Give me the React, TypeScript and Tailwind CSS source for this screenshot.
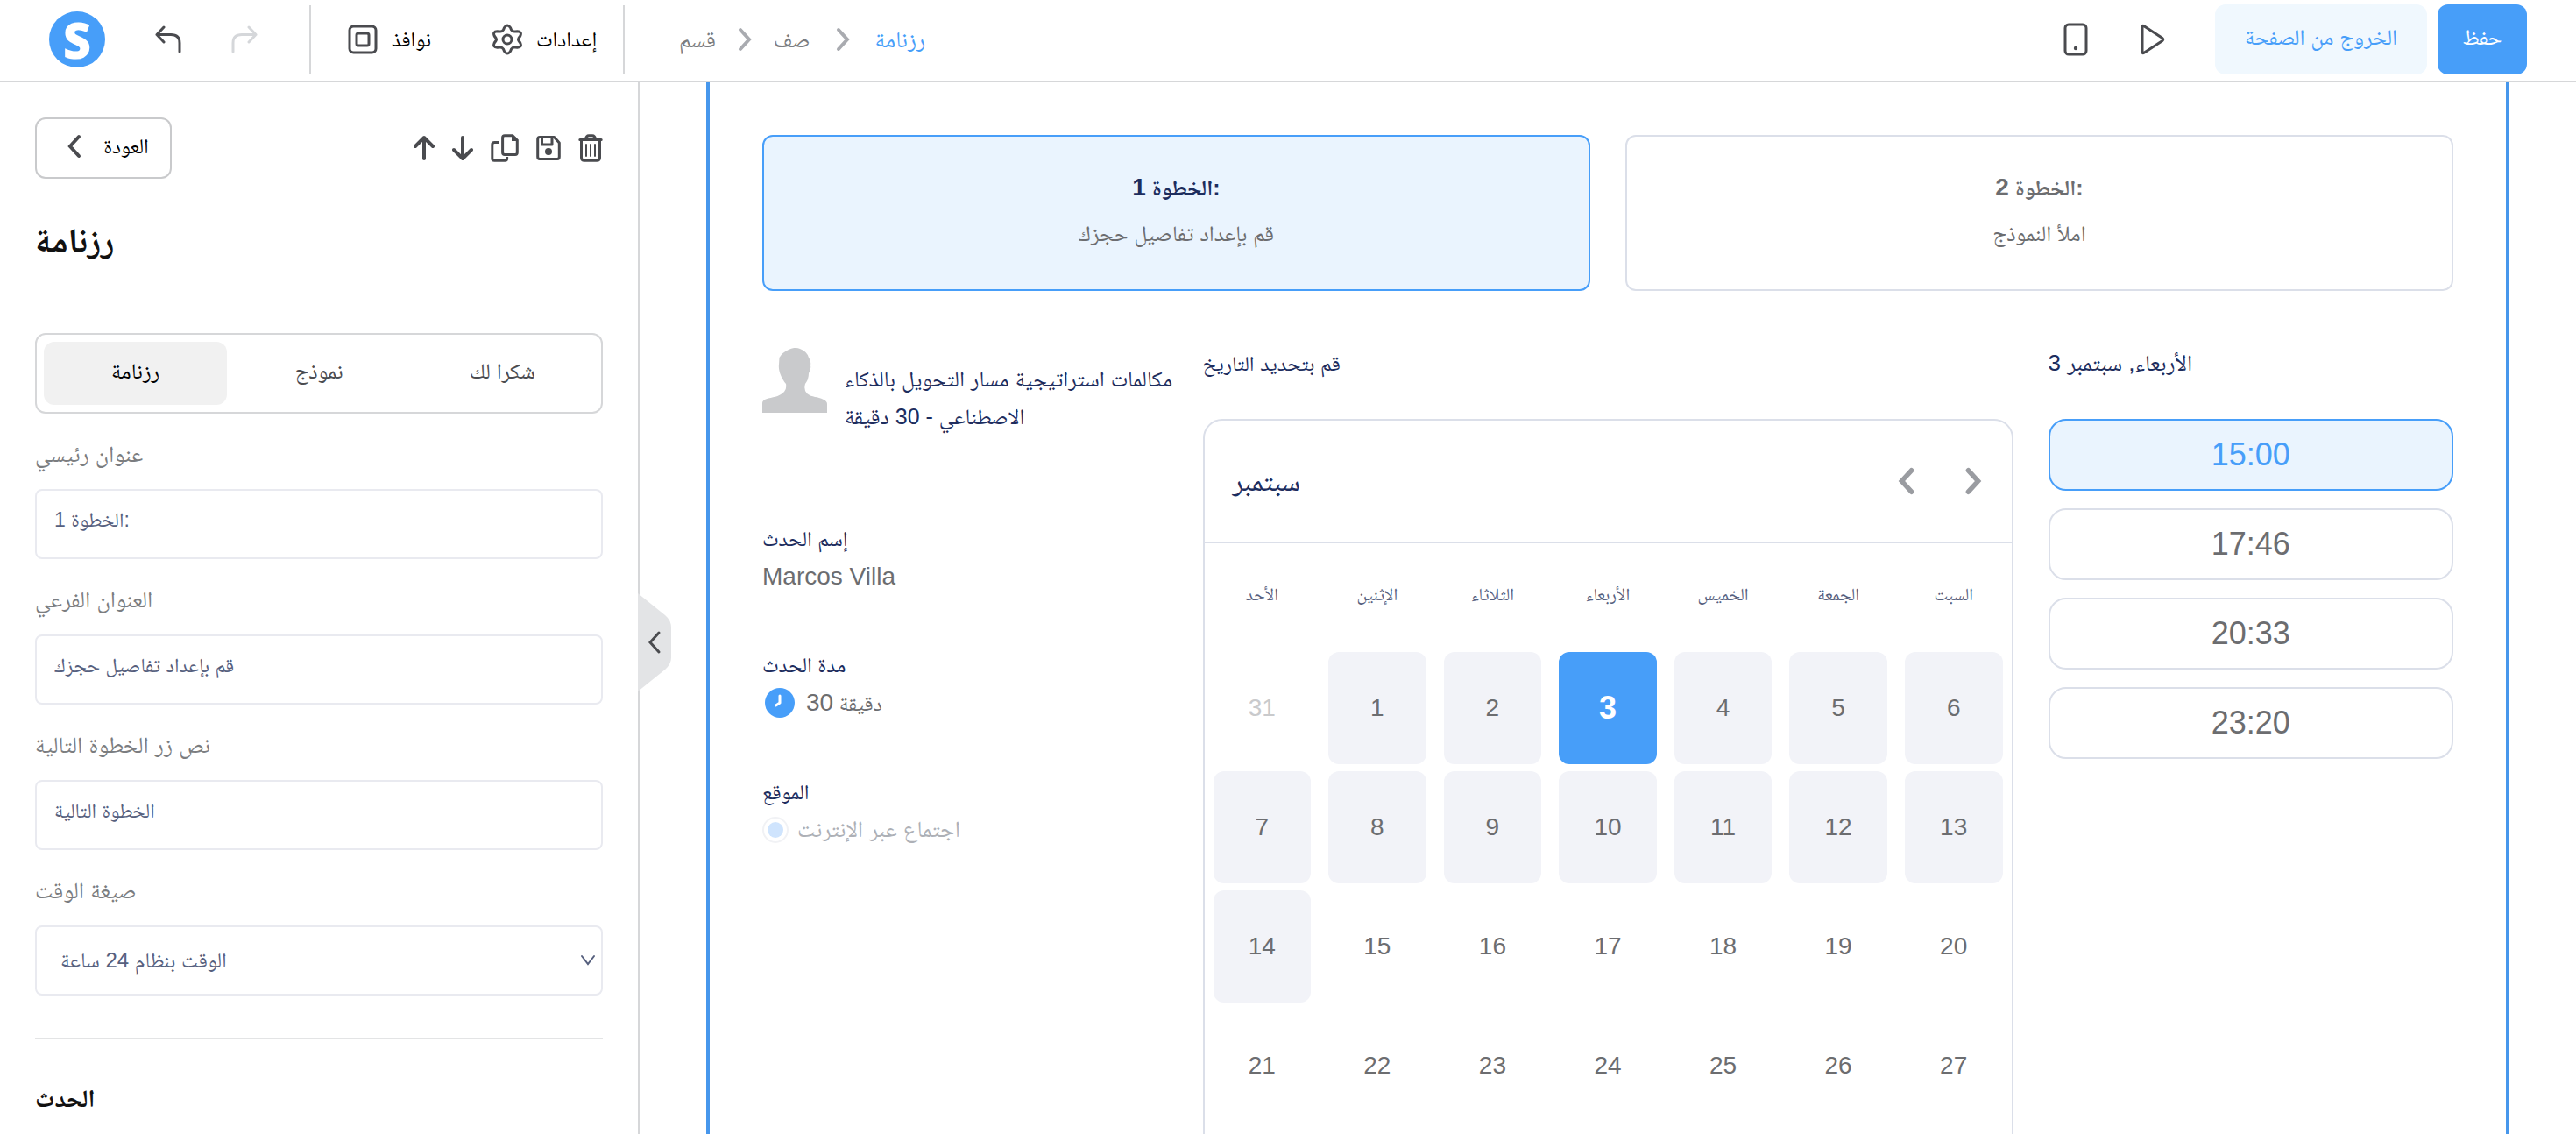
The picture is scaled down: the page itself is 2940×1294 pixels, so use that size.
import type { ReactNode } from 'react';

function UndoIcon() {
  return (
    <svg width="30" height="32" viewBox="0 0 30 32" fill="none" stroke="currentColor" strokeWidth="3" strokeLinecap="round" strokeLinejoin="round">
      <path d="M10 2L2 10.500L10 19M2 10.500H18C25 10.500 28 14 28 20V30" />
    </svg>
  );
}

function RedoIcon() {
  return (
    <svg width="30" height="32" viewBox="0 0 30 32" fill="none" stroke="currentColor" strokeWidth="3" strokeLinecap="round" strokeLinejoin="round">
      <path d="M20 2L28 10.500L20 19M28 10.500H12C5 10.500 2 14 2 20V30" />
    </svg>
  );
}

function PopupsIcon() {
  return (
    <svg width="34" height="34" viewBox="0 0 34 34" fill="none" stroke="currentColor" strokeWidth="3">
      <rect x="2" y="2" width="30" height="30" rx="4.500" />
      <rect x="10" y="10" width="14" height="14" rx="2" />
    </svg>
  );
}

function GearIcon() {
  return (
    <svg width="34" height="36" viewBox="0 0 34 36" fill="none" stroke="currentColor" strokeWidth="3" strokeLinejoin="round">
      <path d="M13.500 4.500Q17 -0.500 20.500 4.500L21.500 7Q23 9.500 26 9L28.500 8.800Q34 9 31.800 14L30 16.500Q29 18 30 19.500L31.800 22Q34 27 28.500 27.200L26 27Q23 26.500 21.500 29L20.500 31.500Q17 36.500 13.500 31.500L12.500 29Q11 26.500 8 27L5.500 27.200Q0 27 2.200 22L4 19.500Q5 18 4 16.500L2.200 14Q0 9 5.500 8.800L8 9Q11 9.500 12.500 7Z" />
      <circle cx="17" cy="18" r="5" />
    </svg>
  );
}

function Chevron({ className, dir, stroke = 4 }: { className: string; dir: 'left' | 'right' | 'down'; stroke?: number }) {
  const d = { left: 'M14 3L4 14L14 25', right: 'M4 3L14 14L4 25', down: 'M2 9L9 18L16 9' }[dir];
  return (
    <svg className={className} viewBox="0 0 18 28" fill="none" stroke="currentColor" strokeWidth={stroke} strokeLinecap="round">
      <path d={d} />
    </svg>
  );
}

function PhoneIcon() {
  return (
    <svg width="28" height="38" viewBox="0 0 28 38" fill="none" stroke="currentColor" strokeWidth="3">
      <rect x="2" y="2" width="24" height="34" rx="4" />
      <circle cx="14" cy="29" r="2.200" fill="currentColor" stroke="none" />
    </svg>
  );
}

function PlayIcon() {
  return (
    <svg width="28" height="36" viewBox="0 0 28 36" fill="none" stroke="currentColor" strokeWidth="3" strokeLinejoin="round">
      <path d="M2 3.500Q2 1.500 4 2.800L25 16.600Q26.600 18 25 19.400L4 33.200Q2 34.500 2 32.500Z" />
    </svg>
  );
}

function ArrowIcon({ down = false }: { down?: boolean }) {
  return (
    <svg width="24" height="30" viewBox="0 0 24 30" fill="none" stroke="currentColor" strokeWidth="4" strokeLinecap="round" strokeLinejoin="round">
      <path d={down ? 'M12 3V26M2 17L12 27L22 17' : 'M12 27V4M2 13L12 3L22 13'} />
    </svg>
  );
}

function CopyIcon() {
  return (
    <svg width="32" height="32" viewBox="0 0 32 32" fill="none" stroke="currentColor" strokeWidth="3">
      <path d="M9 9.500H4.500Q1.800 9.500 1.800 12V28Q1.800 30.300 4.200 30.300H16.500Q18.600 30.300 18.600 28V26" />
      <path d="M16 1.700H25L30.300 7V21Q30.300 23.500 28 23.500H16Q13.600 23.500 13.600 21V4Q13.600 1.700 16 1.700Z" />
      <path d="M24 1V8H31L29 4Z" fill="currentColor" stroke="none" />
    </svg>
  );
}

function SaveIcon() {
  return (
    <svg width="28" height="30" viewBox="0 0 28 30" fill="none" stroke="currentColor" strokeWidth="3" strokeLinejoin="round">
      <path d="M4 2.500H20.500L26.300 9V25Q26.300 27.500 24 27.500H4Q1.700 27.500 1.700 25V5Q1.700 2.500 4 2.500Z" />
      <path d="M6.500 3V11H18V3" />
      <circle cx="14" cy="19" r="4" fill="currentColor" stroke="none" />
    </svg>
  );
}

function TrashIcon() {
  return (
    <svg width="28" height="32" viewBox="0 0 28 32" fill="none" stroke="currentColor" strokeWidth="3" strokeLinecap="round">
      <path d="M1.800 6.500H26.200M8.500 6Q9 1.800 12 1.800H16Q19 1.800 19.500 6" />
      <path d="M3.500 8V27Q3.500 30.300 7 30.300H21Q24.500 30.300 24.500 27V8" />
      <path d="M9 12V25M14 12V25M19 12V25" strokeWidth="2" />
    </svg>
  );
}

function Avatar() {
  return (
    <svg className="mt-1 h-[74px] w-[74px] shrink-0" viewBox="0 0 74 74" fill="#c9cacc">
      <path d="M0 74V63Q0 60 4 58.500C12 55.500 18 57 25 50Q28 47 27 41C22 35 18 26 19 19L19.500 11Q23 5 30 2Q36 -1.500 43 1Q51 4 53 11Q56 15 55 20Q56 24 53 29Q53 36 49 41Q47 48 51 52C57 57 63 55 70 59Q74 61 74 64V74Z" />
    </svg>
  );
}

function ClockIcon() {
  return (
    <svg className="ml-[3px] h-[34px] w-[34px]" viewBox="0 0 34 34" fill="none">
      <circle cx="17" cy="17" r="17" fill="#479ef9" />
      <path d="M17 9V17L12.500 20" stroke="#fff" strokeWidth="3" strokeLinecap="round" strokeLinejoin="round" />
    </svg>
  );
}

function IconButton({ label, children, disabled }: { label: string; children: ReactNode; disabled?: boolean }) {
  return (
    <button type="button" aria-label={label} disabled={disabled} className="disabled:text-[#d5d7da]">
      {children}
    </button>
  );
}

function Header() {
  return (
    <header className="flex h-[94px] shrink-0 items-start border-b-2 border-[#d6d7d9] bg-white text-[#4a4b4f]">
      <div className="flex h-[90px] w-[353px] items-center pl-14">
        <a href="#home" aria-label="Home" className="flex h-16 w-16 items-center justify-center rounded-full bg-[#479ef9] font-['Open_Sans',sans-serif] text-[56px] leading-none font-extrabold text-white">
          S
        </a>
        <div className="ml-[57px] flex gap-[57px]">
          <IconButton label="Undo"><UndoIcon /></IconButton>
          <IconButton label="Redo" disabled><RedoIcon /></IconButton>
        </div>
      </div>
      <div className="mt-1.5 flex h-[78px] w-[360px] items-center gap-[70px] border-x-2 border-[#d6d7d9] pl-[42px] text-[24px] text-black">
        <button type="button" className="flex items-center gap-4"><span className="text-[#4a4b4f]"><PopupsIcon /></span>نوافذ</button>
        <button type="button" className="flex items-center gap-4"><span className="text-[#4a4b4f]"><GearIcon /></span>إعدادات</button>
      </div>
      <nav aria-label="Breadcrumb" className="flex h-[90px] items-center gap-6 pl-[62px] text-[26px] text-[#7b7d80]">
        <a href="#section">قسم</a>
        <Chevron dir="right" stroke={4} className="h-7 w-[18px] text-[#a9abb0]" />
        <a href="#row">صف</a>
        <Chevron dir="right" stroke={4} className="mx-1 h-7 w-[18px] text-[#a9abb0]" />
        <a href="#calendar" className="text-[#479ef9]">رزنامة</a>
      </nav>
      <div className="mt-[5px] ml-auto flex h-20 items-center pr-14 text-[25px]">
        <IconButton label="Mobile view"><PhoneIcon /></IconButton>
        <div className="mr-[57px] ml-[60px] flex"><IconButton label="Preview"><PlayIcon /></IconButton></div>
        <button type="button" className="h-20 w-[242px] rounded-xl bg-[#f0f8fe] pb-1 text-[#479ef9]">الخروج من الصفحة</button>
        <button type="button" className="ml-3 h-20 w-[102px] rounded-xl bg-[#479ef9] pb-1 text-white">حفظ</button>
      </div>
    </header>
  );
}

const fields = [
  { id: 'headline', label: 'عنوان رئيسي', value: 'الخطوة 1:' },
  { id: 'subtitle', label: 'العنوان الفرعي', value: 'قم بإعداد تفاصيل حجزك' },
  { id: 'next', label: 'نص زر الخطوة التالية', value: 'الخطوة التالية' },
];

function Sidebar() {
  return (
    <aside className="relative w-[730px] shrink-0 border-r-2 border-[#d6d7d9] px-10 pt-10">
      <div className="flex items-center justify-between text-[#4a4b4f]">
        <button type="button" className="flex h-[70px] w-[156px] items-center justify-center gap-6 rounded-xl border-2 border-[#c9cacc] pb-1 pl-[10px] text-[24px] text-black">
          <Chevron dir="left" className="h-7 w-[18px] text-[#4a4b4f]" />
          العودة
        </button>
        <div className="flex items-center gap-5">
          <IconButton label="Move up"><ArrowIcon /></IconButton>
          <IconButton label="Move down"><ArrowIcon down /></IconButton>
          <IconButton label="Duplicate"><CopyIcon /></IconButton>
          <IconButton label="Save block"><SaveIcon /></IconButton>
          <IconButton label="Delete"><TrashIcon /></IconButton>
        </div>
      </div>
      <h1 className="mt-10 h-[60px] text-[40px] leading-[60px] font-bold text-[#111]">رزنامة</h1>
      <div role="tablist" className="mt-[76px] grid h-[92px] grid-cols-3 rounded-xl border-2 border-[#d6d7d9] p-2 text-[25px] text-[#4a4b4f]">
        <button type="button" role="tab" aria-selected="true" className="rounded-xl bg-[#f1f1f1] pb-1 text-black">رزنامة</button>
        <button type="button" role="tab" aria-selected="false" className="pb-1">نموذج</button>
        <button type="button" role="tab" aria-selected="false" className="pb-1">شكرا لك</button>
      </div>
      <form className="mt-7">
        {fields.map((f) => (
          <div key={f.id} className="mb-7">
            <label htmlFor={f.id} className="block h-[58px] text-[26px] leading-9 text-[#7b7d80]">{f.label}</label>
            <input id={f.id} type="text" defaultValue={f.value} className="h-20 w-full rounded-lg border-2 border-[#e9eaf0] px-5 pb-1 text-left text-[23px] text-[#56607e]" />
          </div>
        ))}
        <label htmlFor="format" className="block h-[58px] text-[26px] leading-9 text-[#7b7d80]">صيغة الوقت</label>
        <div className="relative text-[#56607e]">
          <select id="format" defaultValue="24" className="h-20 w-full appearance-none rounded-lg border-2 border-[#e9eaf0] bg-white pl-[27px] text-left text-[24px]">
            <option value="24">الوقت بنظام 24 ساعة</option>
          </select>
          <Chevron dir="down" stroke={2} className="pointer-events-none absolute top-[26px] right-2 h-7 w-[18px]" />
        </div>
      </form>
      <hr className="mt-12 border-t-2 border-[#e3e4e5]" />
      <h2 className="mt-[46px] text-[28px] leading-[44px] font-bold text-[#111]">الحدث</h2>
      <button type="button" aria-label="Collapse panel" className="absolute top-[583px] left-full flex h-28 w-[38px] items-center justify-center text-[#4a4b4f]">
        <svg className="absolute inset-0" width="38" height="112" viewBox="0 0 38 112" fill="#e3e4e6">
          <path d="M0 0L31 25Q38 31 38 39V73Q38 81 31 87L0 112Z" />
        </svg>
        <Chevron dir="left" stroke={3} className="relative h-7 w-[18px]" />
      </button>
    </aside>
  );
}

function StepCard({ title, num, text, active }: { title: string; num: string; text: string; active?: boolean }) {
  return (
    <button
      type="button"
      className={
        active
          ? 'h-[178px] rounded-xl border-2 border-[#479ef9] bg-[#eaf4fe] pb-1.5 text-[#1d2d5e]'
          : 'h-[178px] rounded-xl border-2 border-[#dbdfe9] pb-1.5 text-[#6c6d70]'
      }
    >
      <span className="block text-[25px] leading-[52px] font-bold">{title} <span className="text-[28px]">{num}</span>:</span>
      <span className="block text-[25px] leading-[52px] text-[#6c6d70]">{text}</span>
    </button>
  );
}

function EventInfo() {
  return (
    <section className="text-[24px] text-[#1d2d5e]">
      <div className="flex h-[200px] gap-5">
        <Avatar />
        <p className="mt-[18px] text-[25px] leading-[43px] whitespace-nowrap">
          مكالمات استراتيجية مسار التحويل بالذكاء
          <br />
          الاصطناعي - 30 دقيقة
        </p>
      </div>
      <dl className="leading-[43px]">
        <div className="mb-[58px]">
          <dt>إسم الحدث</dt>
          <dd className="text-[28px] text-[#6c6d70]">Marcos Villa</dd>
        </div>
        <div className="mb-[58px]">
          <dt>مدة الحدث</dt>
          <dd className="flex items-center gap-[13px] text-[#6c6d70]">
            <ClockIcon />
            <span><span className="text-[28px]">30</span> دقيقة</span>
          </dd>
        </div>
        <div>
          <dt>الموقع</dt>
          <dd className="text-[26px] text-[#adb0b6]">
            <label className="flex items-center gap-[10px]">
              <input type="radio" name="location" defaultChecked className="h-[30px] w-[30px] appearance-none rounded-full border-2 border-[#f1f2f5] bg-[#cfe4fd] bg-clip-content p-1" />
              اجتماع عبر الإنترنت
            </label>
          </dd>
        </div>
      </dl>
    </section>
  );
}

const weekdays = ['الأحد', 'الإثنين', 'الثلاثاء', 'الأربعاء', 'الخميس', 'الجمعة', 'السبت'];
const weeks = [
  [31, 1, 2, 3, 4, 5, 6],
  [7, 8, 9, 10, 11, 12, 13],
  [14, 15, 16, 17, 18, 19, 20],
  [21, 22, 23, 24, 25, 26, 27],
];

function dayClass(day: number) {
  if (day === 31) return 'h-32 w-full text-[#c9cacc]';
  if (day === 3) return 'h-32 w-full rounded-xl bg-[#479ef9] text-[36px] font-bold text-white';
  if (day <= 14) return 'h-32 w-full rounded-xl bg-[#f2f3f8]';
  return 'h-32 w-full';
}

function Calendar() {
  return (
    <section>
      <h3 className="h-[85px] text-[24px] leading-[43px] text-[#1d2d5e]">قم بتحديد التاريخ</h3>
      <div className="min-h-[900px] rounded-[22px] border-2 border-[#dbdfe9]">
        <div className="flex h-[140px] items-center justify-between border-b-2 border-[#dbdfe9] pr-[34px] pl-8 text-[32px] text-[#1d2d5e]">
          <span>سبتمبر</span>
          <div className="flex gap-14 text-[#9a9ca1]">
            <IconButton label="Previous month"><Chevron dir="left" stroke={5} className="h-8 w-5" /></IconButton>
            <IconButton label="Next month"><Chevron dir="right" stroke={5} className="h-8 w-5" /></IconButton>
          </div>
        </div>
        <table className="w-full table-fixed text-[28px] text-[#6c6d70]">
          <thead>
            <tr className="h-[120px] text-[20px] text-[#56607e]">
              {weekdays.map((d) => <th key={d} scope="col" className="pb-1 font-normal">{d}</th>)}
            </tr>
          </thead>
          <tbody>
            {weeks.map((week) => (
              <tr key={week[0]}>
                {week.map((day) => (
                  <td key={day} className="px-[10px] py-1">
                    <button type="button" className={dayClass(day)}>{day}</button>
                  </td>
                ))}
              </tr>
            ))}
          </tbody>
        </table>
      </div>
    </section>
  );
}

function Slots() {
  return (
    <section>
      <h3 className="h-[85px] text-[26px] leading-[43px] text-[#1d2d5e]">الأربعاء, سبتمبر 3</h3>
      <div className="flex flex-col gap-5 text-[36px] text-[#6c6d70]">
        {['15:00', '17:46', '20:33', '23:20'].map((t, i) => (
          <button
            key={t}
            type="button"
            className={
              i === 0
                ? 'h-[82px] rounded-[20px] border-2 border-[#479ef9] bg-[#eaf4fe] text-[#479ef9]'
                : 'h-[82px] rounded-[20px] border-2 border-[#dbdfe9]'
            }
          >
            {t}
          </button>
        ))}
      </div>
    </section>
  );
}

export default function App() {
  return (
    <div className="flex h-screen flex-col overflow-hidden bg-white font-['Liberation_Sans','Noto_Naskh_Arabic','Noto_Sans_Arabic','DejaVu_Sans',sans-serif]">
      <Header />
      <div className="flex min-h-0 flex-1">
        <Sidebar />
        <main className="min-w-0 flex-1 overflow-hidden px-[76px]">
          <div className="min-h-full border-x-4 border-[#4797ec] px-[60px] pt-[60px]">
            <div className="grid grid-cols-2 gap-10">
              <StepCard title="الخطوة" num="1" text="قم بإعداد تفاصيل حجزك" active />
              <StepCard title="الخطوة" num="2" text="املأ النموذج" />
            </div>
            <div className="mt-[61px] grid grid-cols-[minmax(0,1fr)_minmax(0,2fr)_minmax(0,1fr)] gap-10">
              <EventInfo />
              <Calendar />
              <Slots />
            </div>
          </div>
        </main>
      </div>
    </div>
  );
}
